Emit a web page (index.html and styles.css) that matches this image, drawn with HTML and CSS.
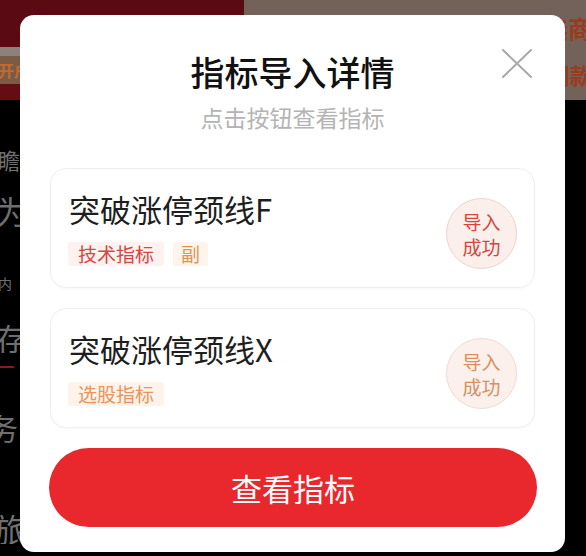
FILE: index.html
```html
<!DOCTYPE html>
<html lang="zh-CN">
<head>
<meta charset="utf-8">
<title>指标导入详情</title>
<link rel="stylesheet" href="styles.css">
</head>
<body>
<div class="page">
  <div class="hero">
    <div class="hero-left">
      <div class="band band-top"></div>
      <div class="band band-gray"></div>
      <div class="band band-brown"><span class="hero-txt">开户</span></div>
      <div class="band band-red"></div>
    </div>
    <div class="hero-right">
      <span class="promo promo-1">精选商</span>
      <span class="promo promo-2">热门款</span>
    </div>
  </div>
  <div class="feed">
    <span class="f f1">瞻</span>
    <span class="f f2">为</span>
    <span class="f f3">内</span>
    <span class="f f4">存</span>
    <span class="f-line"></span>
    <span class="f f5">务</span>
    <span class="f f6">旅</span>
  </div>
</div>

<div class="mask">
  <div class="dialog">
    <button class="close" aria-label="关闭">
      <svg width="30" height="30" viewBox="0 0 30 30"><path d="M1 1 L29 28 M29 1 L1 28" stroke="#a9a9a9" stroke-width="2" fill="none" stroke-linecap="round"/></svg>
    </button>
    <div class="head">
      <h1 class="title">指标导入详情</h1>
      <p class="sub">点击按钮查看指标</p>
    </div>
    <div class="list">
      <div class="card">
        <div class="info">
          <div class="name">突破涨停颈线F</div>
          <div class="tags">
            <span class="tag tag-red">技术指标</span>
            <span class="tag tag-orange">副</span>
          </div>
        </div>
        <div class="badge badge-red">导入<br>成功</div>
      </div>
      <div class="card">
        <div class="info">
          <div class="name">突破涨停颈线X</div>
          <div class="tags">
            <span class="tag tag-orange2">选股指标</span>
          </div>
        </div>
        <div class="badge badge-tan">导入<br>成功</div>
      </div>
    </div>
    <button class="main-btn">查看指标</button>
  </div>
</div>
</body>
</html>
```
FILE: styles.css
```css
* { box-sizing: border-box; }
html, body {
  margin: 0;
  padding: 0;
  width: 586px;
  height: 556px;
  overflow: hidden;
  background: #000;
  font-family: "Noto Sans CJK SC", "Noto Sans", sans-serif;
}

/* ---------- background page ---------- */
.page {
  display: flex;
  flex-direction: column;
  height: 556px;
}
.hero {
  display: flex;
  height: 100px;
}
.hero-left {
  width: 244px;
  display: flex;
  flex-direction: column;
}
.band-top { height: 47px; background: #5a0a13; }
.band-gray { height: 9px; background: #8c827c; }
.band-brown {
  height: 28px;
  background: #7a5c46;
  display: flex;
  align-items: center;
  overflow: hidden;
}
.hero-txt {
  font-size: 16px;
  color: #c4692e;
  margin-left: -2px;
  font-weight: 700;
}
.band-red { flex: 1; background: #640d14; }
.hero-right {
  flex: 1;
  background: #726259;
  display: flex;
  flex-direction: column;
  align-items: flex-end;
  padding-top: 14px;
  overflow: hidden;
}
.promo {
  font-size: 24px;
  font-weight: 700;
  color: #9c3a1c;
  white-space: nowrap;
  margin-right: -6px;
  line-height: 28px;
}
.promo-2 { margin-top: 18px; font-size: 22px; }

.feed {
  display: flex;
  flex-direction: column;
  align-items: flex-start;
  color: #6f6f6f;
  overflow: hidden;
}
.f { display: block; line-height: 1; }
.f1 { font-size: 22px; margin-top: 48px; margin-left: -2px; }
.f2 { font-size: 32px; margin-top: 24px; margin-left: -4px; }
.f3 { font-size: 14px; margin-top: 50px; margin-left: -2px; }
.f4 { font-size: 30px; margin-top: 32px; margin-left: -4px; }
.f-line { display: block; width: 14px; height: 2px; background: #8a1a22; margin-top: 14px; }
.f5 { font-size: 30px; margin-top: 44px; margin-left: -12px; }
.f6 { font-size: 32px; margin-top: 70px; margin-left: -6px; }

/* ---------- dialog ---------- */
.mask {
  position: fixed;
  inset: 0;
  display: flex;
  padding: 15px 21px 4px 20px;
}
.dialog {
  position: relative;
  flex: 1;
  background: #fff;
  border-radius: 14px;
  display: flex;
  flex-direction: column;
  padding: 0 30px 25px;
}
.close {
  position: absolute;
  top: 34px;
  right: 33px;
  width: 30px;
  height: 30px;
  padding: 0;
  border: 0;
  background: none;
  display: flex;
}
.head {
  display: flex;
  flex-direction: column;
  align-items: center;
  padding-top: 37px;
}
.title {
  margin: 0;
  font-size: 34px;
  line-height: 40px;
  font-weight: 500;
  color: #111;
}
.sub {
  margin: 11px 0 0;
  font-size: 23px;
  line-height: 28px;
  color: #b4b4b4;
}
.list {
  display: flex;
  flex-direction: column;
  gap: 20px;
  margin-top: 37px;
}
.card {
  height: 120px;
  border: 1px solid #f0eeee;
  border-radius: 16px;
  display: flex;
  align-items: flex-start;
  padding: 22px 17px 0 17px;
  box-shadow: 0 1px 2px rgba(0,0,0,0.03);
}
.info {
  flex: 1;
  display: flex;
  flex-direction: column;
}
.name {
  font-size: 31px;
  line-height: 36px;
  color: #1e1e1e;
  margin-left: 1px;
}
.tags {
  display: flex;
  gap: 9px;
  margin-top: 15px;
}
.tag {
  font-size: 19px;
  line-height: 24px;
  height: 24px;
  padding: 0 10px;
  border-radius: 3px;
}
.tag-red { color: #d5463f; background: #fdf2f0; }
.tag-orange { color: #e0954f; background: #fdf5ec; padding: 0 8px; }
.tag-orange2 { color: #e8945a; background: #fdf3ea; }
.badge {
  width: 71px;
  height: 71px;
  border-radius: 50%;
  margin-top: 7px;
  display: flex;
  align-items: center;
  justify-content: center;
  text-align: center;
  font-size: 19px;
  line-height: 25px;
}
.badge-red { background: #fbefec; border: 1px solid #eed3cd; color: #d5463f; }
.badge-tan { background: #fcf0ec; border: 1px solid #f0dbd2; color: #d98f5e; }

.main-btn {
  margin: 20px -2px 0 -1px;
  height: 79px;
  border: 0;
  border-radius: 40px;
  background: #e8282c;
  color: #fff;
  font-family: inherit;
  font-size: 31px;
  letter-spacing: 0;
  padding: 0;
}
```
